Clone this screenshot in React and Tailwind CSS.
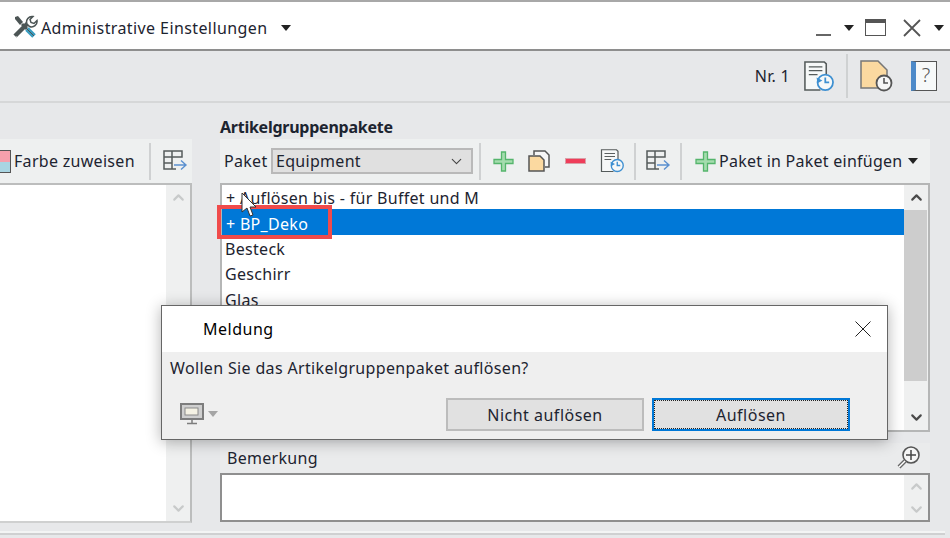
import { ChevronDown, ChevronUp } from 'lucide-react';

const font = { fontFamily: '"Noto Sans", "Open Sans", sans-serif' };

function Caret({ className = '' }) {
  return <span className={`block w-0 h-0 border-x-[5px] border-x-transparent border-t-[6px] border-t-[#222] ${className}`}></span>;
}

function Sep() {
  return <span className="block w-[2px] h-[37px] bg-[#cfd1d2] shrink-0"></span>;
}

function PlusIcon({ size = 21 }) {
  return (
    <svg width={size} height={size} viewBox="0 0 21 21">
      <path d="M8.500 1h4v7.500H20v4h-7.500V20h-4v-7.500H1v-4h7.500z" fill="#a5dcae" stroke="#55b56c" strokeWidth="1.300" />
    </svg>
  );
}

function HistoryDoc({ size = 24 }) {
  return (
    <svg width={size} height={size} viewBox="0 0 32 32" fill="none">
      <path d="M18 30H2V1h20l2 2v11" stroke="#555b5b" strokeWidth="1.600" fill="#f6f8f8" />
      <path d="M6 6h14M6 10h14M6 14h9" stroke="#555b5b" strokeWidth="1.300" />
      <circle cx="23" cy="22" r="8" stroke="#3d8fd1" strokeWidth="1.800" fill="#f6f8f8" />
      <path d="M23 17v5h4" stroke="#3d8fd1" strokeWidth="1.800" />
      <path d="M14 17l1 6 5-3" fill="#3d8fd1" />
    </svg>
  );
}

function TableArrow() {
  return (
    <svg width="25" height="22" viewBox="0 0 25 22" fill="none">
      <path d="M1 1h18v6H1zM1 7h8v6H1zM1 13h8v6H1zM9 1v6M9 7h10M9 19h4" stroke="#555b5b" strokeWidth="1.500" />
      <path d="M11 15h12M18 10.500l5 4.500-5 4.500" stroke="#5b90cf" strokeWidth="1.400" />
    </svg>
  );
}

function Scroll({ thumb, className = '', muted }) {
  const color = muted ? 'text-[#c8caca]' : 'text-[#4a4a4a]';
  return (
    <div className={`w-6 shrink-0 flex flex-col items-center justify-between bg-[#eff0f0] ${className}`}>
      <span className="h-[25px] flex items-center"><ChevronUp size={17} strokeWidth={3} className={color} /></span>
      {thumb && <span className="w-[23px] flex-1 self-start bg-[#cdcdcd]"></span>}
      {thumb && <span className="h-[23px]"></span>}
      <span className="h-[26px] flex items-center"><ChevronDown size={17} strokeWidth={3} className={color} /></span>
    </div>
  );
}

export default function App() {
  return (
    <div className="relative w-[950px] h-[538px] overflow-hidden bg-[#e7e8ea] text-[#1d2430] flex flex-col text-[16px] tracking-[0.3px]" style={font}>
      {/* Title bar */}
      <div className="h-[51px] shrink-0 bg-white border-t-2 border-t-[#a8a8a8] border-b-2 border-b-[#8e8e8e] flex items-center pl-[13px] pr-[6px] pt-[4px]">
        <svg width="25" height="25" viewBox="0 0 25 25" fill="none">
          <path d="M2 2l3-1 5 6-3 3-5-6z" fill="#4c5555" />
          <path d="M9 9l5 5" stroke="#4c5555" strokeWidth="3" />
          <path d="M14 14l7 7" stroke="#3a9cc0" strokeWidth="5" />
          <path d="M14 14l7 7" stroke="#4c5555" strokeWidth="1" />
          <path d="M2 21L15 8" stroke="#4c5555" strokeWidth="4.500" />
          <path d="M14 9a5.500 5.500 0 0 1 6-7.500l-3 3 1 3 3 1 3-3a5.500 5.500 0 0 1-7.500 6z" fill="#fff" stroke="#4c5555" strokeWidth="1.500" />
          <path d="M1.500 23.500l2-2" stroke="#fff" strokeWidth="1" />
        </svg>
        <span className="ml-[3px] leading-none tracking-[0.4px]">Administrative Einstellungen</span>
        <Caret className="ml-[14px]" />
        <div className="ml-auto flex items-center">
          <span className="block w-[15px] h-[2px] bg-[#666] mt-[15px]"></span>
          <Caret className="ml-[13px] mt-[1px]" />
          <span className="ml-[11px] block w-[21px] h-[17px] border-[1.500px] border-[#555] border-t-[4px]"></span>
          <svg className="ml-[17px]" width="18" height="18" viewBox="0 0 18 18"><path d="M1 1l16 16M17 1L1 17" stroke="#555" strokeWidth="1.800" /></svg>
          <Caret className="ml-[13px] mt-[1px]" />
        </div>
      </div>

      {/* Record toolbar */}
      <div className="h-[52px] shrink-0 border-b-2 border-b-[#d6d7d8] flex items-center justify-end pr-[13px]">
        <span className="mr-[13px]">Nr. 1</span>
        <HistoryDoc size={31} />
        <span className="block w-[2px] h-[44px] bg-[#cfd1d2] mx-[12px]"></span>
        <svg width="34" height="32" viewBox="0 0 34 32" fill="none">
          <path d="M1 1h17l9 9v18H1z" fill="#fbd9a0" stroke="#777" strokeWidth="1.500" />
          <circle cx="24" cy="23" r="7.500" fill="#f6f6f6" stroke="#555" strokeWidth="1.800" />
          <path d="M24 18v5h4" stroke="#555" strokeWidth="1.600" />
        </svg>
        <span className="block w-[26px] h-[30px] ml-[17px] border-[1.500px] border-[#555] border-l-[5px] border-l-[#4d8ac9] bg-[#f7f9f9] text-[20px] leading-[26px] text-center text-[#555] tracking-normal font-light">?</span>
      </div>

      {/* Panels */}
      <div className="flex-1 flex items-start gap-[28px] pt-[13px]">
        {/* Left panel */}
        <div className="w-[192px] shrink-0 mt-[23px]">
          <div className="h-[44px] bg-[#eef0f0] flex items-center overflow-hidden">
            <span className="block w-[11px] h-[23px] shrink-0 border border-[#555] border-l-0 bg-[linear-gradient(#f5a0ac_50%,#a9d5e2_50%)]"></span>
            <span className="ml-[3px] whitespace-nowrap">Farbe zuweisen</span>
            <span className="block w-[2px] h-[37px] bg-[#cfd1d2] ml-[14px] shrink-0"></span>
            <span className="ml-[12px] block"><TableArrow /></span>
          </div>
          <div className="h-[340px] bg-white border-y-2 border-r-2 border-[#bcbdbd] border-b-[#cfd0d0] flex justify-end">
            <Scroll muted />
          </div>
        </div>

        {/* Right panel */}
        <div className="w-[710px] shrink-0">
          <div className="h-[23px] font-bold leading-[23px] tracking-[-0.25px]">Artikelgruppenpakete</div>
          <div className="h-[44px] bg-[#eef0f0] flex items-center pl-[4px] whitespace-nowrap">
            <span className="w-[47px]">Paket</span>
            <div className="w-[202px] h-[26px] bg-[#e0e0e0] border-2 border-[#b9b9b9] flex items-center justify-between pl-[3px] pr-[6px]">
              <span>Equipment</span>
              <ChevronDown size={17} strokeWidth={1.500} className="text-[#444]" />
            </div>
            <span className="ml-[6px]"><Sep /></span>
            <span className="ml-[12px] flex"><PlusIcon /></span>
            <svg className="ml-[14px]" width="22" height="22" viewBox="0 0 22 22" fill="none">
              <path d="M6 5V1h11l4 4v12h-4" stroke="#555" strokeWidth="1.500" fill="#f6f6f6" />
              <path d="M1 6h11l4 4v11H1z" fill="#fbd9a0" stroke="#555" strokeWidth="1.500" />
            </svg>
            <span className="ml-[15px] block w-[21px] h-[6px] bg-[#ef3d5a] border border-[#d9a0a8]"></span>
            <span className="ml-[14px] flex"><HistoryDoc size={24} /></span>
            <span className="ml-[10px]"><Sep /></span>
            <span className="ml-[10px] flex"><TableArrow /></span>
            <span className="ml-[9px]"><Sep /></span>
            <span className="ml-[13px] flex"><PlusIcon /></span>
            <span className="ml-[3px] tracking-[0.25px]">Paket in Paket einfügen</span>
            <Caret className="ml-[6px]" />
          </div>
          <div className="h-[249px] bg-white border-2 border-[#b5b6b6] flex">
            <div className="flex-1">
              <div className="pl-[4px] h-[24px] pt-[1px] leading-[24px]">+ Auflösen bis - für Buffet und M</div>
              <div className="pl-[4px] h-[26px] pt-[2px] leading-[26px] bg-[#0078d7] text-white">+ BP_Deko</div>
              <div className="pl-[3px] h-[26px] pt-[1px] leading-[26px]">Besteck</div>
              <div className="pl-[3px] h-[25px] pt-[1px] leading-[25px]">Geschirr</div>
              <div className="pl-[3px] h-[25px] pt-[2px] leading-[25px]">Glas</div>
            </div>
            <Scroll thumb />
          </div>
          <div className="h-[30px] mt-[11px] flex items-center justify-between pl-[7px] pr-[8px] bg-[#eaebec]">
            <span>Bemerkung</span>
            <svg width="26" height="26" viewBox="0 0 26 26" fill="none">
              <circle cx="15" cy="10" r="8" stroke="#555" strokeWidth="1.600" fill="#f5f5f5" />
              <path d="M15 5v10M10 10h10" stroke="#444" strokeWidth="1.500" />
              <path d="M9 16l-6 6" stroke="#666" strokeWidth="4" />
              <path d="M9 16l-6 6" stroke="#fff" strokeWidth="1.500" />
            </svg>
          </div>
          <div className="h-[49px] bg-white border-2 border-[#8f8f8f] flex justify-end">
            <Scroll muted className="[&>span]:h-[22px]" />
          </div>
        </div>
      </div>

      {/* Bottom line */}
      <div className="absolute left-0 right-[5px] top-[531px] h-[4px] bg-[#f3f4f4] border-b-2 border-b-[#cfd0d1]"></div>

      {/* Red annotation */}
      <div className="absolute left-[217px] top-[205px] w-[115px] h-[34px] border-4 border-[#f04b4b]"></div>

      {/* Mouse cursor */}
      <svg className="absolute left-[241px] top-[192px]" width="17" height="26" viewBox="0 0 17 26">
        <path d="M1 1v19l5-4 3 8 3-1-3-8h6z" fill="#fff" stroke="#333" strokeWidth="1" />
      </svg>

      {/* Dialog */}
      <div className="absolute left-[161px] top-[305px] w-[727px] h-[135px] bg-[#efefef] border border-[#666] shadow-[0_2px_14px_rgba(0,0,0,0.3)] flex flex-col">
        <div className="h-[46px] bg-white flex items-center justify-between pl-[41px] pr-[16px]">
          <span className="text-black tracking-[0.5px]">Meldung</span>
          <svg width="16" height="16" viewBox="0 0 16 16"><path d="M0.500 0.500l15 15M15.500 0.500l-15 15" stroke="#222" strokeWidth="1" /></svg>
        </div>
        <div className="h-[32px] flex items-center pl-[8px] tracking-[0.34px]">Wollen Sie das Artikelgruppenpaket auflösen?</div>
        <div className="flex-1 flex items-start pl-[18px] pr-[37px] pt-[14px]">
          <svg className="mt-[5px]" width="24" height="22" viewBox="0 0 24 22" fill="none">
            <rect x="1" y="1" width="22" height="15" fill="#cfcfcf" stroke="#7d7d7d" strokeWidth="2" />
            <rect x="5" y="5" width="13" height="7" fill="#f5f2e4" stroke="#8a8a8a" />
            <path d="M12 16v4M7 20.500h10" stroke="#7d7d7d" strokeWidth="1.500" />
          </svg>
          <span className="ml-[4px] mt-[13px] block w-0 h-0 border-x-[5px] border-x-transparent border-t-[6px] border-t-[#a5a5a5]"></span>
          <button className="ml-auto w-[198px] h-[33px] bg-[#e1e1e1] border-2 border-[#bcbcbc] tracking-[0.5px]">Nicht auflösen</button>
          <button className="ml-[8px] w-[198px] h-[33px] bg-[#e1e1e1] border-2 border-[#0078d7] tracking-[0.5px] outline-1 outline-dotted outline-[#222] -outline-offset-3">Auflösen</button>
        </div>
      </div>
    </div>
  );
}
